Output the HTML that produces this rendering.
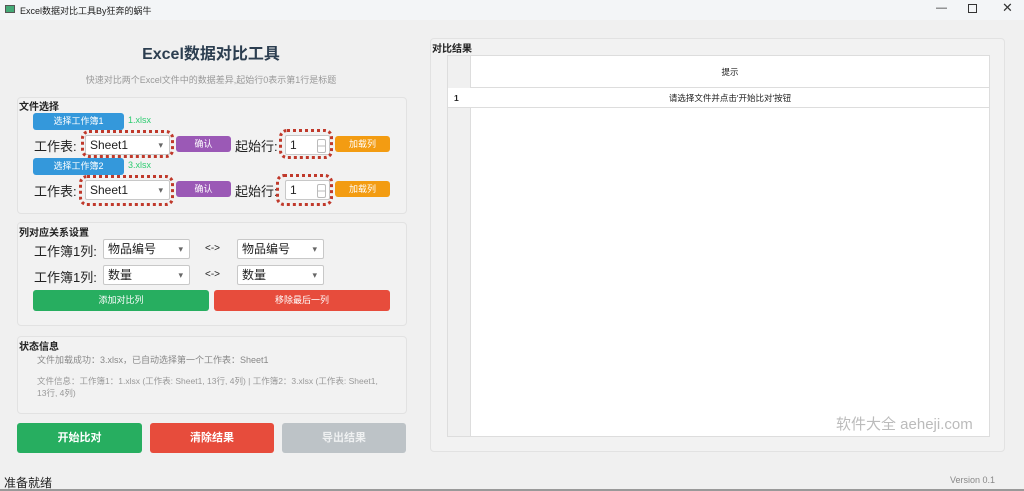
<!DOCTYPE html>
<html><head><meta charset="utf-8"><style>
*{margin:0;padding:0;box-sizing:border-box}
body{width:1024px;height:491px;background:#f0f0f0;font-family:"Liberation Sans","Noto Sans CJK SC",sans-serif;position:relative;overflow:hidden;color:#222}
.a{position:absolute}
.box{position:absolute;border:1px solid #e2e2e2;border-radius:4px;background:#f2f2f2}
.lbl{position:absolute;font-size:10px;font-weight:bold;color:#222}
.btn{position:absolute;color:#fff;font-size:9px;text-align:center;border-radius:3px}
.cb{position:absolute;background:#fff;border:1px solid #c8c8c8;border-radius:2px;font-size:12px;padding-left:4px;line-height:18px}
.cb:after{content:"▾";position:absolute;right:6px;top:0;font-size:9px;color:#666}
.sp{position:absolute;background:#fff;border:1px solid #c8c8c8;border-radius:2px;font-size:12px;padding-left:4px;line-height:18px}
.sp:after{content:"";position:absolute;right:3px;top:3px;width:7px;height:12px;border:1px solid #bbb;border-radius:2px;background:linear-gradient(#fff 45%,#bbb 45%,#bbb 55%,#fff 55%)}
.dot{position:absolute;border:3px dotted #c0392b;border-radius:8px}
.t13{position:absolute;font-size:13px}
</style></head><body>
<div class="a" style="left:0;top:0;width:1024px;height:20px;background:#f3f5f7"></div>
<div class="a" style="left:5px;top:5px;width:10px;height:8px;background:#4a7;border:1px solid #555"></div>
<div class="a" style="left:20px;top:4px;font-size:9px">Excel数据对比工具By狂奔的蜗牛</div>
<div class="a" style="left:936px;top:2px;font-size:11px;color:#333">—</div>
<div class="a" style="left:968px;top:4px;width:9px;height:9px;border:1px solid #333"></div>
<div class="a" style="left:1002px;top:0px;font-size:13px;color:#333">✕</div>

<div class="a" style="left:0;top:40px;width:422px;text-align:center;font-size:16px;font-weight:bold;color:#2c3e50">Excel数据对比工具</div>
<div class="a" style="left:0;top:73px;width:422px;text-align:center;font-size:9px;color:#999">快速对比两个Excel文件中的数据差异,起始行0表示第1行是标题</div>

<div class="box" style="left:17px;top:97px;width:390px;height:117px"></div>
<div class="lbl" style="left:19px;top:98px">文件选择</div>
<div class="btn" style="left:33px;top:113px;width:91px;height:17px;line-height:17px;background:#3498db">选择工作簿1</div>
<div class="a" style="left:128px;top:115px;font-size:9px;color:#2ecc71">1.xlsx</div>
<div class="t13" style="left:34px;top:136px">工作表:</div>
<div class="cb" style="left:85px;top:135px;width:85px;height:20px">Sheet1</div>
<div class="dot" style="left:81px;top:130px;width:93px;height:28px"></div>
<div class="btn" style="left:176px;top:136px;width:55px;height:16px;line-height:16px;background:#9b59b6">确认</div>
<div class="t13" style="left:235px;top:136px">起始行:</div>
<div class="sp" style="left:285px;top:135px;width:45px;height:20px">1</div>
<div class="dot" style="left:279px;top:129px;width:54px;height:30px"></div>
<div class="btn" style="left:335px;top:136px;width:55px;height:16px;line-height:16px;background:#f39c12">加载列</div>

<div class="btn" style="left:33px;top:158px;width:91px;height:17px;line-height:17px;background:#3498db">选择工作簿2</div>
<div class="a" style="left:128px;top:160px;font-size:9px;color:#2ecc71">3.xlsx</div>
<div class="t13" style="left:34px;top:181px">工作表:</div>
<div class="cb" style="left:85px;top:180px;width:85px;height:20px">Sheet1</div>
<div class="dot" style="left:79px;top:175px;width:95px;height:31px"></div>
<div class="btn" style="left:176px;top:181px;width:55px;height:16px;line-height:16px;background:#9b59b6">确认</div>
<div class="t13" style="left:235px;top:181px">起始行:</div>
<div class="sp" style="left:285px;top:180px;width:45px;height:20px">1</div>
<div class="dot" style="left:276px;top:174px;width:57px;height:32px"></div>
<div class="btn" style="left:335px;top:181px;width:55px;height:16px;line-height:16px;background:#f39c12">加载列</div>

<div class="box" style="left:17px;top:222px;width:390px;height:104px"></div>
<div class="lbl" style="left:19px;top:224px">列对应关系设置</div>
<div class="t13" style="left:34px;top:241px">工作簿1列:</div>
<div class="cb" style="left:103px;top:239px;width:87px;height:20px">物品编号</div>
<div class="a" style="left:205px;top:243px;font-size:10px">&lt;-&gt;</div>
<div class="cb" style="left:237px;top:239px;width:87px;height:20px">物品编号</div>
<div class="t13" style="left:34px;top:267px">工作簿1列:</div>
<div class="cb" style="left:103px;top:265px;width:87px;height:20px">数量</div>
<div class="a" style="left:205px;top:269px;font-size:10px">&lt;-&gt;</div>
<div class="cb" style="left:237px;top:265px;width:87px;height:20px">数量</div>
<div class="btn" style="left:33px;top:290px;width:176px;height:21px;line-height:21px;background:#27ae60">添加对比列</div>
<div class="btn" style="left:214px;top:290px;width:176px;height:21px;line-height:21px;background:#e74c3c">移除最后一列</div>

<div class="box" style="left:17px;top:336px;width:390px;height:78px"></div>
<div class="lbl" style="left:19px;top:338px">状态信息</div>
<div class="a" style="left:37px;top:353px;font-size:9px;color:#888">文件加载成功：3.xlsx，已自动选择第一个工作表：Sheet1</div>
<div class="a" style="left:37px;top:375px;width:350px;font-size:8.5px;line-height:12px;color:#999">文件信息：工作簿1：1.xlsx (工作表: Sheet1, 13行, 4列) | 工作簿2：3.xlsx (工作表: Sheet1, 13行, 4列)</div>

<div class="btn" style="left:17px;top:423px;width:125px;height:30px;line-height:30px;font-size:11px;font-weight:bold;background:#27ae60">开始比对</div>
<div class="btn" style="left:150px;top:423px;width:124px;height:30px;line-height:30px;font-size:11px;font-weight:bold;background:#e74c3c">清除结果</div>
<div class="btn" style="left:282px;top:423px;width:124px;height:30px;line-height:30px;font-size:11px;font-weight:bold;background:#bdc3c7;color:#eef0f1">导出结果</div>

<div class="a" style="left:4px;top:474px;font-size:12px;color:#222">准备就绪</div>
<div class="a" style="left:950px;top:475px;font-size:9px;color:#888">Version 0.1</div>
<div class="a" style="left:0;top:489px;width:1024px;height:2px;background:#999"></div>

<div class="box" style="left:430px;top:38px;width:575px;height:414px"></div>
<div class="lbl" style="left:432px;top:40px">对比结果</div>
<div class="a" style="left:447px;top:55px;width:543px;height:382px;background:#fff;border:1px solid #ddd"></div>
<div class="a" style="left:448px;top:56px;width:23px;height:380px;background:#f0f0f0;border-right:1px solid #ddd"></div>
<div class="a" style="left:471px;top:56px;width:518px;height:32px;background:#fff;border-bottom:1px solid #ddd;text-align:center;line-height:32px;font-size:8.5px">提示</div>
<div class="a" style="left:448px;top:88px;width:23px;height:20px;line-height:20px;padding-left:6px;font-size:8.5px;font-weight:bold;background:#fff;border-bottom:1px solid #ddd">1</div>
<div class="a" style="left:471px;top:88px;width:518px;height:20px;line-height:20px;text-align:center;font-size:8.5px;border-bottom:1px solid #ddd">请选择文件并点击'开始比对'按钮</div>
<div class="a" style="left:836px;top:413px;font-size:15px;color:#bbb">软件大全 aeheji.com</div>
</body></html>
